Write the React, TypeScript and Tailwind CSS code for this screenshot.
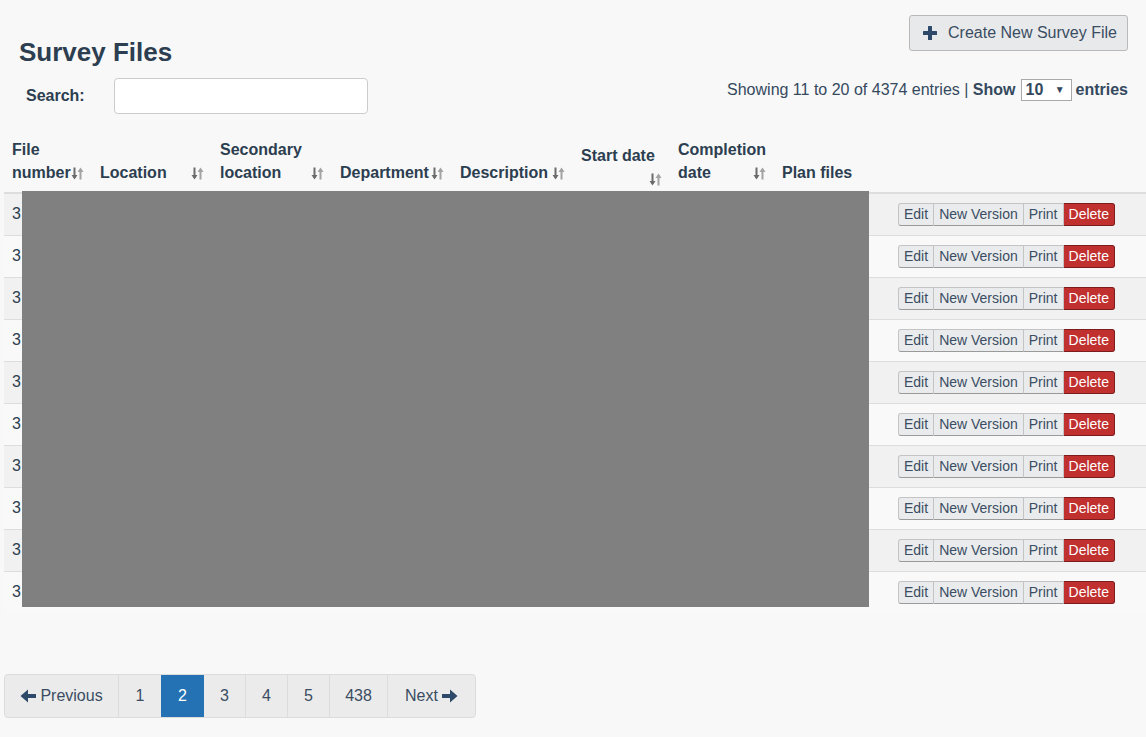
import React from "react"

const font = "font-['Liberation_Sans',Arial,Helvetica,sans-serif]"

function SortIcon() {
  return (
    <svg width="13" height="13" viewBox="0 0 13 13" className="shrink-0">
      <path d="M3.5 0.5 V11" stroke="#6b6b6b" strokeWidth="2" />
      <path d="M0.5 8 L3.5 12.5 L6.5 8 Z" fill="#6b6b6b" />
      <path d="M9.5 2 V12.5" stroke="#a3a3a3" strokeWidth="2" />
      <path d="M6.5 5 L9.5 0.5 L12.5 5 Z" fill="#a3a3a3" />
    </svg>
  )
}

function PlusIcon() {
  return (
    <svg width="14" height="14" viewBox="0 0 14 14">
      <rect x="5" y="0" width="4" height="14" rx="0.5" fill="#2e4a6b" />
      <rect x="0" y="5" width="14" height="4" rx="0.5" fill="#2e4a6b" />
    </svg>
  )
}

function ArrowIcon({ dir }: { dir: "left" | "right" }) {
  return (
    <svg width="16" height="14" viewBox="0 0 16 14" className={dir === "right" ? "" : "-scale-x-100"}>
      <path d="M0 5 H8 V0.5 L15.5 7 L8 13.5 V9 H0 Z" fill="#2e4a6b" />
    </svg>
  )
}

// header cell: optional first line, then last line with sort icon at the right edge
function SortHeader({ top, last }: { top?: string; last: string }) {
  return (
    <th className="px-2 pb-2 pt-2 align-bottom">
      {top && <div>{top}</div>}
      <div className="flex items-end justify-between">
        <span>{last}</span>
        <span className="mb-[4px]"><SortIcon /></span>
      </div>
    </th>
  )
}

const rows = Array.from({ length: 10 }, (_, i) => i)

const grayBtn = "border-y border-r border-[#c4c4c4] border-b-[#9a9a9a] bg-[#eaebed] text-[#3a4d62]"

export default function App() {
  return (
    <div className={`relative min-h-screen bg-[#f8f8f8] ${font} text-[#2c3e50]`}>
      <div className="flex justify-between pl-[19px] pr-[18px] pt-[15px]">
        <div className="pt-[22px]">
          <h1 className="text-[26px] font-bold leading-[31px] text-[#2c3e50]">Survey Files</h1>
          <div className="mt-[10px] flex items-center">
            <label className="ml-[7px] w-[88px] text-[16px] font-bold">Search:</label>
            <input className="h-[36px] w-[254px] rounded-[4px] border border-[#cccccc] bg-white" />
          </div>
        </div>
        <div className="flex flex-col items-end">
          <button className="flex h-[36px] w-[219px] items-center gap-[11px] rounded-[3px] border border-[#b9b9b9] bg-[#e8e9eb] pl-[13px] text-[16px] text-[#3a4d62]">
            <PlusIcon />
            Create New Survey File
          </button>
          <div className="mt-[28px] flex items-center text-[16px] leading-[22px] text-[#34495e]">
            <span>Showing 11 to 20 of 4374 entries |&nbsp;</span>
            <span className="font-bold">Show</span>
            <span className="ml-[5px] mr-[4px] flex h-[22px] w-[51px] items-center justify-between border border-[#a9a9a9] bg-white pl-[4px] pr-[6px] font-bold">
              10<span className="text-[10px] font-normal">▼</span>
            </span>
            <span className="font-bold">entries</span>
          </div>
        </div>
      </div>

      <div className="relative ml-[4px] mt-[16px]">
        <table className="w-[1142px] table-fixed border-collapse text-[16px]">
          <colgroup>
            <col className="w-[88px]" />
            <col className="w-[120px]" />
            <col className="w-[120px]" />
            <col className="w-[120px]" />
            <col className="w-[121px]" />
            <col className="w-[97px]" />
            <col className="w-[104px]" />
            <col className="w-[116px]" />
            <col />
          </colgroup>
          <thead>
            <tr className="border-b-2 border-[#dddddd] text-left font-bold leading-[23px]">
              <SortHeader top="File" last="number" />
              <SortHeader last="Location" />
              <SortHeader top="Secondary" last="location" />
              <SortHeader last="Department" />
              <SortHeader last="Description" />
              <th className="px-2 pb-[6px] pt-2 align-bottom">
                <div className="flex flex-col">
                  <span>Start date</span>
                  <span className="mt-[6px] self-end"><SortIcon /></span>
                </div>
              </th>
              <SortHeader top="Completion" last="date" />
              <th className="px-2 pb-2 pt-2 align-bottom">Plan files</th>
              <th className="px-2 pb-2 pt-2 align-bottom"></th>
            </tr>
          </thead>
          <tbody>
            {rows.map((i) => (
              <tr key={i} className={`h-[42px] border-t border-[#dddddd] ${i % 2 === 0 ? "bg-[#f1f1f1]" : "bg-[#f9f9f9]"}`}>
                <td className="px-2 align-middle text-[#2c3e50]">3</td>
                <td></td>
                <td></td>
                <td></td>
                <td></td>
                <td></td>
                <td></td>
                <td></td>
                <td className="px-2 align-middle">
                  <div className="flex h-[23px] text-[14px] leading-[21px]">
                    <span className={`rounded-l-[3px] border-l px-[5px] ${grayBtn}`}>Edit</span>
                    <span className={`px-[5px] ${grayBtn}`}>New Version</span>
                    <span className={`px-[5px] ${grayBtn}`}>Print</span>
                    <span className="rounded-r-[3px] border-y border-r border-[#7d1c1c] bg-[#c0302f] px-[5px] text-white">Delete</span>
                  </div>
                </td>
              </tr>
            ))}
          </tbody>
        </table>
        <div className="absolute bottom-[6px] left-[18px] top-[61px] w-[847px] bg-[#808080]" />
      </div>

      <div className="ml-[4px] mt-[61px] flex h-[44px] w-fit rounded-[4px] border border-[#dcdcdc] bg-[#ebebeb] text-[16px] text-[#3a4d62]">
        <span className="flex w-[114px] items-center justify-center gap-[4px] border-r border-[#dcdcdc]">
          <ArrowIcon dir="left" />
          Previous
        </span>
        <span className="flex w-[42px] items-center justify-center">1</span>
        <span className="flex w-[43px] items-center justify-center bg-[#2472b4] text-white">2</span>
        {["3", "4", "5"].map((p) => (
          <span key={p} className="flex w-[42px] items-center justify-center border-r border-[#dcdcdc]">{p}</span>
        ))}
        <span className="flex w-[58px] items-center justify-center border-r border-[#dcdcdc]">438</span>
        <span className="flex w-[87px] items-center justify-center gap-[4px]">
          Next
          <ArrowIcon dir="right" />
        </span>
      </div>
    </div>
  )
}
